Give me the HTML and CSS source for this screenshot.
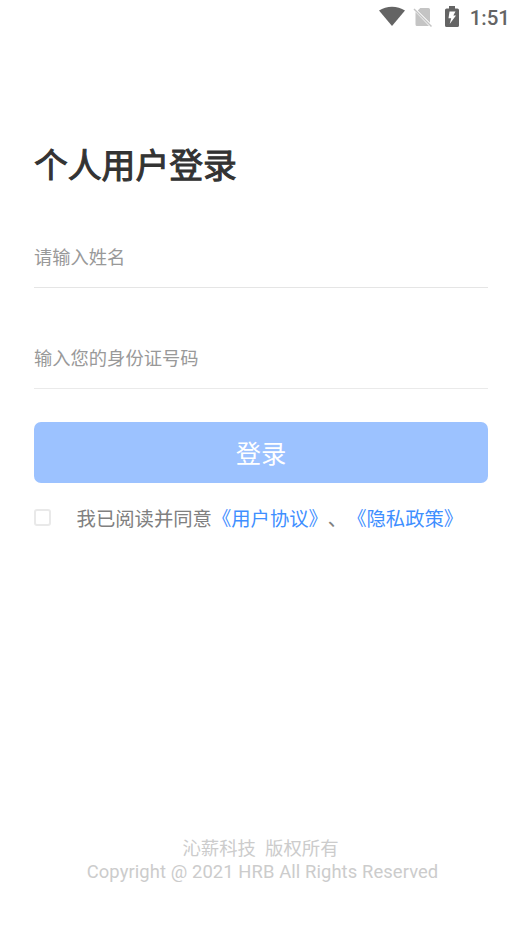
FILE: index.html
```html
<!DOCTYPE html>
<html lang="zh-CN">
<head>
<meta charset="utf-8">
<title>个人用户登录</title>
<link rel="stylesheet" href="styles.css">
</head>
<body>
<header class="status">
  <svg class="wifi" width="26" height="20" viewBox="0 0 26 20"><path d="M0 4.5C7.5-.6 18.5-.6 26 4.5L13 20Z" fill="#646464"/></svg>
  <svg class="sim" width="20" height="21" viewBox="0 0 20 21"><path d="M7.3 1H15.5Q17 1 17 2.5V15.8L4.7 3.6ZM2.5 4.9L16 19H4Q2.5 19 2.5 17.5Z" fill="#c4c4c4"/><path d="M1 2L18.5 19.5" stroke="#c4c4c4" stroke-width="1.5"/></svg>
  <svg class="battery" width="14" height="22" viewBox="0 0 14 22"><path d="M4 0H10V2.4H12.4Q14 2.4 14 4V19.5Q14 21 12.4 21H1.6Q0 21 0 19.5V4Q0 2.4 1.6 2.4H4Z" fill="#646464"/><path d="M4.5 5.5H10.5L8.3 9.5H11L4.7 18L6.2 12.2H3.5Z" fill="#fff"/></svg>
  <time>1:51</time>
</header>
<main class="login">
  <h1>个人用户登录</h1>
  <form>
    <input class="field" type="text" placeholder="请输入姓名">
    <input class="field second" type="text" placeholder="输入您的身份证号码">
    <button class="submit" type="button">登录</button>
    <label class="agree"><input class="check" type="checkbox"><span>我已阅读并同意<a>《用户协议》</a>、<a>《隐私政策》</a></span></label>
  </form>
</main>
<footer>
  <p>沁薪科技&nbsp; 版权所有</p>
  <p class="copyright">Copyright @ 2021 HRB All Rights Reserved</p>
</footer>
</body>
</html>
```
FILE: styles.css
```css
* { box-sizing: border-box; }
body {
  margin: 0;
  height: 928px;
  display: flex;
  flex-direction: column;
  background: #fff;
  color: #333;
  font-family: Roboto, "Noto Sans CJK SC", sans-serif;
  text-spacing-trim: space-all;
}
.status {
  height: 36px;
  padding: 6px 12px 0 0;
  display: flex;
  justify-content: flex-end;
  align-items: flex-start;
}
.wifi { margin-right: 8px; }
.sim { margin: 1px 12px 0 0; }
.battery { margin-right: 11px; }
time {
  color: #646464;
  font-size: 20.5px;
  font-weight: 500;
  line-height: 24px;
}
.login { padding: 106px 34px 0; }
h1 {
  margin: 0;
  font-size: 33.8px;
  line-height: 50px;
  font-weight: 400;
  -webkit-text-stroke: 1px #333;
}
form { display: flex; flex-direction: column; }
.field {
  height: 62px;
  margin-top: 34px;
  padding: 2px 0 0;
  border: 0;
  border-bottom: 1px solid #e5e5e5;
  background: none;
  font: 18.3px Roboto, "Noto Sans CJK SC", sans-serif;
  outline: 0;
}
.second { margin-top: 39px; border-bottom-color: #eaeaea; }
.field::placeholder { color: #999; opacity: 1; }
.submit {
  height: 61px;
  margin-top: 33px;
  padding: 0 0 2px;
  border: 0;
  border-radius: 7px;
  background: #9cc2ff;
  color: #fff;
  font: 25.3px Roboto, "Noto Sans CJK SC", sans-serif;
}
.agree {
  display: flex;
  align-items: center;
  height: 30px;
  margin-top: 20px;
  color: #808080;
  font-size: 19.33px;
  white-space: nowrap;
}
.check {
  appearance: none;
  width: 17px;
  height: 17px;
  margin: 0 25.6px 2px 0;
  border: 2px solid #e9e9e9;
  border-radius: 3px;
}
.agree a { color: #3f8fff; }
footer {
  margin-top: auto;
  padding-bottom: 45px;
  text-align: center;
  color: #ccc;
  font-size: 18.4px;
  line-height: 23px;
}
footer p { margin: 0; padding-right: 1px; }
footer .copyright { padding: 0 0 0 3px; letter-spacing: .09px; }
```
